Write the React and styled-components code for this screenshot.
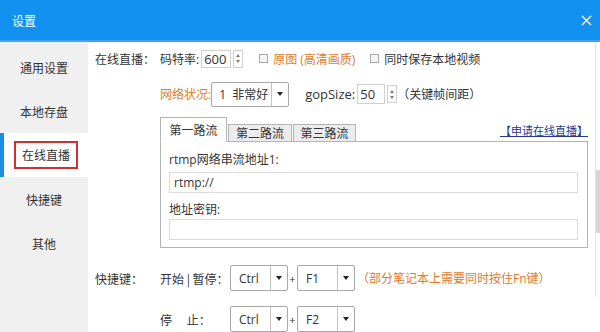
import styled, { createGlobalStyle } from "styled-components";

const colors = {
  title: "#1391f1",
  side: "#f0f0f0",
  text: "#333333",
  orange: "#e07b2c",
  link: "#27378f",
  border: "#b4b4b4",
  light: "#dadada",
};

const GlobalStyle = createGlobalStyle`
  html, body {
    margin: 0;
    padding: 0;
    background: #fff;
  }
  body {
    font-family: "Open Sans", "Noto Sans CJK SC", sans-serif;
    font-size: 12px;
    color: ${colors.text};
  }
`;

const Window = styled.div`
  width: 600px;
  height: 332px;
  display: flex;
  flex-direction: column;
  overflow: hidden;
  background: #fff;
`;

const TitleBar = styled.div`
  height: 42px;
  flex: none;
  box-sizing: border-box;
  background: ${colors.title};
  border-bottom: 2px solid #3aa3f3;
  color: #fff;
  display: flex;
  align-items: center;
  justify-content: space-between;
  padding: 0 8px 0 12px;
  font-family: "Noto Sans CJK SC", sans-serif;
  font-size: 12px;
`;

const Body = styled.div`
  flex: 1;
  display: flex;
  min-height: 0;
`;

const Sidebar = styled.div`
  width: 88px;
  flex: none;
  background: ${colors.side};
  padding-top: 3px;
  display: flex;
  flex-direction: column;
`;

const SideItem = styled.div`
  height: 44px;
  box-sizing: border-box;
  display: flex;
  align-items: center;
  justify-content: center;
  font-family: "Noto Sans CJK SC", sans-serif;
  font-size: 12px;
  color: #333;
  background: ${(p) => (p.active ? "#fff" : "transparent")};
  border-left: ${(p) => (p.active ? "4px solid #1a8fe0" : "0")};
`;

const Marked = styled.span`
  border: 2px solid #cf3030;
  padding: 3px 6px;
  line-height: 18px;
`;

const Main = styled.div`
  flex: 1;
  display: flex;
  min-width: 0;
`;

const Content = styled.div`
  flex: 1;
  padding: 7px 7px 0 7px;
  display: flex;
  flex-direction: column;
`;

const ScrollTrack = styled.div`
  width: 5px;
  height: 255px;
  border-left: 1px solid #e4e4e4;
  padding-top: 128px;
  box-sizing: border-box;
`;

const ScrollThumb = styled.div`
  width: 4px;
  height: 63px;
  background: #d6d6d6;
`;

const Row = styled.div`
  display: flex;
  align-items: center;
  height: ${(p) => p.h}px;
  margin-top: ${(p) => p.mt || 0}px;
  white-space: nowrap;
`;

const SectionLabel = styled.div`
  width: 65px;
  flex: none;
  font-family: "Noto Sans CJK SC", sans-serif;
`;

const SubLabel = styled.div`
  width: 70px;
  flex: none;
  font-family: "Noto Sans CJK SC", sans-serif;
`;

const Text = styled.span`
  color: ${(p) => (p.orange ? colors.orange : colors.text)};
  margin-left: ${(p) => p.ml || 0}px;
  font-size: ${(p) => p.size || 12}px;
`;

const NumberBox = styled.div`
  width: ${(p) => p.w}px;
  height: ${(p) => p.h}px;
  box-sizing: border-box;
  border: 1px solid #cfcfcf;
  margin-left: ${(p) => p.ml || 0}px;
  display: flex;
  align-items: center;
  padding-left: 2px;
  font-size: 13px;
`;

const Spinner = styled.div`
  width: 10px;
  height: 18px;
  box-sizing: border-box;
  margin-left: 2px;
  border: 1px solid #d0d0d0;
  display: flex;
  flex-direction: column;
  align-items: center;
  justify-content: space-around;
  padding: 2px 0;
  &::before,
  &::after {
    content: "";
    border-left: 2px solid transparent;
    border-right: 2px solid transparent;
  }
  &::before {
    border-bottom: 3px solid #7a7a7a;
  }
  &::after {
    border-top: 3px solid #7a7a7a;
  }
`;

const Check = styled.span`
  width: 9px;
  height: 9px;
  box-sizing: border-box;
  border: 1px solid #a9a9a9;
  background: #f4f4f4;
  margin-left: ${(p) => p.ml || 0}px;
  margin-right: 5px;
`;

const Select = styled.div`
  width: ${(p) => p.w}px;
  height: ${(p) => p.h}px;
  box-sizing: border-box;
  border: 1px solid #a8a8a8;
  border-radius: 2px;
  background: #fff;
  display: flex;
  align-items: stretch;
  flex: none;
`;

const SelectValue = styled.div`
  flex: 1;
  display: flex;
  align-items: center;
  padding-left: ${(p) => p.pl || 8}px;
  font-size: 12px;
`;

const SelectArrow = styled.div`
  width: 16px;
  border-left: 1px solid #c4c4c4;
  display: flex;
  align-items: center;
  justify-content: center;
  &::after {
    content: "";
    border-left: 3px solid transparent;
    border-right: 3px solid transparent;
    border-top: 4px solid #222;
  }
`;

const Plus = styled.span`
  width: 9px;
  text-align: center;
  font-size: 11px;
`;

const TabHeader = styled.div`
  display: flex;
  align-items: flex-end;
  height: 24px;
  margin-top: 10px;
  margin-left: 65px;
`;

const Tab = styled.div`
  width: ${(p) => p.w}px;
  height: ${(p) => (p.active ? 25 : 18)}px;
  box-sizing: border-box;
  border: 1px solid ${colors.border};
  border-bottom: ${(p) => (p.active ? "1px solid #fff" : `1px solid ${colors.border}`)};
  margin-bottom: -1px;
  margin-left: ${(p) => (p.active ? 0 : 1)}px;
  background: ${(p) => (p.active ? "#fff" : "#ececec")};
  display: flex;
  align-items: center;
  justify-content: center;
  font-family: "Noto Sans CJK SC", sans-serif;
  font-size: 12px;
  position: relative;
  z-index: 1;
`;

const ApplyLink = styled.a`
  margin-left: auto;
  margin-bottom: 4px;
  color: ${colors.link};
  font-family: "Noto Sans CJK SC", sans-serif;
  font-size: 11px;
  text-decoration: underline;
  line-height: 14px;
`;

const Panel = styled.div`
  margin-left: 65px;
  height: 110px;
  box-sizing: border-box;
  border: 1px solid ${colors.border};
  padding: 9px 9px 0 8px;
  display: flex;
  flex-direction: column;
`;

const FieldLabel = styled.div`
  height: 18px;
  line-height: 18px;
  margin-top: ${(p) => p.mt || 0}px;
  font-size: 12px;
`;

const TextField = styled.div`
  height: 21px;
  margin-top: ${(p) => p.mt || 0}px;
  box-sizing: border-box;
  border: 1px solid ${colors.light};
  padding-left: 4px;
  display: flex;
  align-items: center;
  font-size: 12px;
`;

const CloseIcon = () => (
  <svg width="11" height="11" viewBox="0 0 11 11">
    <path d="M1 1L10 10M10 1L1 10" stroke="#fff" strokeWidth="1.3" />
  </svg>
);

const Dropdown = ({ w, h, value }) => (
  <Select w={w} h={h}>
    <SelectValue>{value}</SelectValue>
    <SelectArrow />
  </Select>
);

export default function App() {
  return (
    <>
      <GlobalStyle />
      <Window>
        <TitleBar>
          <span>设置</span>
          <CloseIcon />
        </TitleBar>
        <Body>
          <Sidebar>
            <SideItem>通用设置</SideItem>
            <SideItem>本地存盘</SideItem>
            <SideItem active>
              <Marked>在线直播</Marked>
            </SideItem>
            <SideItem>快捷键</SideItem>
            <SideItem>其他</SideItem>
          </Sidebar>
          <Main>
            <Content>
              <Row h={20}>
                <SectionLabel>在线直播：</SectionLabel>
                <Text>码特率:</Text>
                <NumberBox w={30} h={18} ml={2}>600</NumberBox>
                <Spinner />
                <Check ml={16} />
                <Text orange>原图 (高清画质)</Text>
                <Check ml={15} />
                <Text>同时保存本地视频</Text>
              </Row>
              <Row h={25} mt={13}>
                <SectionLabel />
                <Text orange>网络状况:</Text>
                <Select w={78} h={25}>
                  <SelectValue pl={7}>1&nbsp;&nbsp;非常好</SelectValue>
                  <SelectArrow />
                </Select>
                <Text ml={16} size={13}>gopSize:</Text>
                <NumberBox w={28} h={20} ml={2}>50</NumberBox>
                <Spinner />
                <Text>（关键帧间距）</Text>
              </Row>
              <TabHeader>
                <Tab active w={67}>第一路流</Tab>
                <Tab w={64}>第二路流</Tab>
                <Tab w={63}>第三路流</Tab>
                <ApplyLink>【申请在线直播】</ApplyLink>
              </TabHeader>
              <Panel>
                <FieldLabel>rtmp网络串流地址1:</FieldLabel>
                <TextField mt={3}>rtmp://</TextField>
                <FieldLabel mt={8}>地址密钥:</FieldLabel>
                <TextField />
              </Panel>
              <Row h={26} mt={17}>
                <SectionLabel>快捷键：</SectionLabel>
                <SubLabel>开始 | 暂停：</SubLabel>
                <Dropdown w={58} h={26} value="Ctrl" />
                <Plus>+</Plus>
                <Dropdown w={58} h={26} value="F1" />
                <Text orange ml={2}>（部分笔记本上需要同时按住Fn键）</Text>
              </Row>
              <Row h={26} mt={15}>
                <SectionLabel />
                <SubLabel>停　 止：</SubLabel>
                <Dropdown w={58} h={26} value="Ctrl" />
                <Plus>+</Plus>
                <Dropdown w={58} h={26} value="F2" />
              </Row>
            </Content>
            <ScrollTrack>
              <ScrollThumb />
            </ScrollTrack>
          </Main>
        </Body>
      </Window>
    </>
  );
}
